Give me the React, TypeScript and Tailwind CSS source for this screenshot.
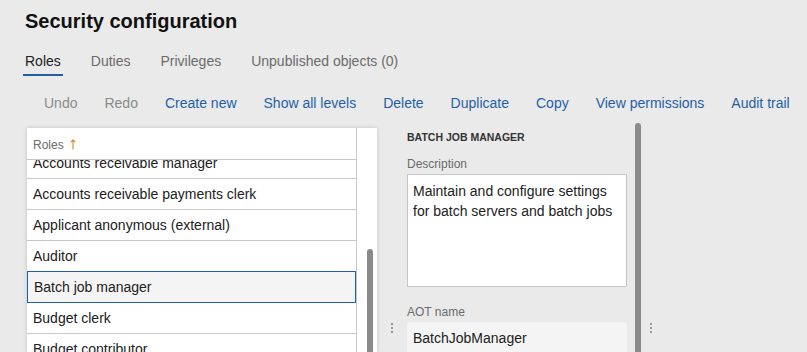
const tabs = ["Roles", "Duties", "Privileges", "Unpublished objects (0)"];

const actions = [
  { label: "Undo", disabled: true },
  { label: "Redo", disabled: true },
  { label: "Create new" },
  { label: "Show all levels" },
  { label: "Delete" },
  { label: "Duplicate" },
  { label: "Copy" },
  { label: "View permissions" },
  { label: "Audit trail" },
];

const roles = [
  "Accounts receivable manager",
  "Accounts receivable payments clerk",
  "Applicant anonymous (external)",
  "Auditor",
  "Batch job manager",
  "Budget clerk",
  "Budget contributor",
];

const Grip = () => (
  <div className="flex flex-col items-center gap-[2px] pt-[200px]">
    <div className="h-[2px] w-[2px] bg-[#9a9a9a]" />
    <div className="h-[2px] w-[2px] bg-[#9a9a9a]" />
    <div className="h-[2px] w-[2px] bg-[#9a9a9a]" />
  </div>
);

export default function App() {
  return (
    <div className="h-[352px] w-[807px] overflow-hidden bg-[#eaeaea] font-['Liberation_Sans',Arial,sans-serif] text-[#212121]">
      <h1 className="pl-[25px] pt-[7px] text-[20px] font-bold leading-[28px] text-[#111]">
        Security configuration
      </h1>

      <div className="mt-[16px] flex gap-[26px] pl-[23px]">
        {tabs.map((tab, i) => (
          <div
            key={tab}
            className={
              i === 0
                ? "border-b-2 border-[#1f5fa8] px-[2px] pb-[3px] text-[14px] leading-[20px] text-[#212121]"
                : "border-b-2 border-transparent px-[2px] pb-[3px] text-[14px] leading-[20px] text-[#6b6b6b]"
            }
          >
            {tab}
          </div>
        ))}
      </div>

      <div className="mt-[17px] flex gap-[27px] pl-[44px] text-[14px] leading-[20px]">
        {actions.map((a) => (
          <span key={a.label} className={a.disabled ? "text-[#8a8a8a]" : "text-[#1f5fa8]"}>
            {a.label}
          </span>
        ))}
      </div>

      <div className="mt-[10px] flex h-[229px]">
        {/* roles list */}
        <div className="ml-[27px] mt-[5px] flex w-[350px] bg-white shadow-[0_0_4px_rgba(0,0,0,0.18)]">
          <div className="flex w-[330px] flex-col border-r border-[#c8c8c8]">
            <div className="flex h-[32px] shrink-0 items-center gap-[6px] border-b border-[#c8c8c8] pl-[6px] pt-[3px] text-[12px] text-[#6b6b6b]">
              Roles
              <svg width="6" height="11" viewBox="0 0 6 11" className="mt-[-1px]">
                <path d="M3 10.5V1M0.8 3.2L3 1l2.2 2.2" fill="none" stroke="#d9822b" strokeWidth="1.1" />
              </svg>
            </div>
            <div className="flex-1 overflow-hidden">
              <div className="-mt-[12px]">
                {roles.map((role) =>
                  role === "Batch job manager" ? (
                    <div
                      key={role}
                      className="relative -mt-[1px] flex h-[32px] items-center border border-[#1f5fa8] bg-[#f4f4f4] pl-[6px] pt-[1px] text-[14px]"
                    >
                      {role}
                    </div>
                  ) : (
                    <div
                      key={role}
                      className="flex h-[31px] items-center border-b border-[#c8c8c8] pl-[6px] pt-[1px] text-[14px]"
                    >
                      {role}
                    </div>
                  )
                )}
              </div>
            </div>
          </div>
          <div className="w-[20px] pl-[10px]">
            <div className="mt-[121px] h-[120px] w-[6px] rounded-t-full bg-[#8a8a8a]" />
          </div>
        </div>

        <div className="flex w-[30px] justify-center">
          <Grip />
        </div>

        {/* details */}
        <div className="w-[220px] pt-[7px]">
          <div className="text-[10.5px] font-bold uppercase leading-[15px] text-[#333]">
            Batch job manager
          </div>
          <div className="mt-[11px] text-[12px] leading-[16px] text-[#6b6b6b]">Description</div>
          <div className="mt-[2px] h-[113px] border border-[#c6c6c6] bg-white px-[5px] pt-[6px] text-[14px] leading-[20px]">
            Maintain and configure settings for batch servers and batch jobs
          </div>
          <div className="mt-[17px] text-[12px] leading-[16px] text-[#6b6b6b]">AOT name</div>
          <div className="mt-[2px] h-[32px] rounded-[2px] bg-[#f4f4f4] px-[6px] text-[14px] leading-[32px]">
            BatchJobManager
          </div>
        </div>

        <div className="ml-[8px] w-[6px] rounded-t-full bg-[#8a8a8a]" />

        <div className="flex w-[20px] justify-center">
          <Grip />
        </div>
      </div>
    </div>
  );
}
